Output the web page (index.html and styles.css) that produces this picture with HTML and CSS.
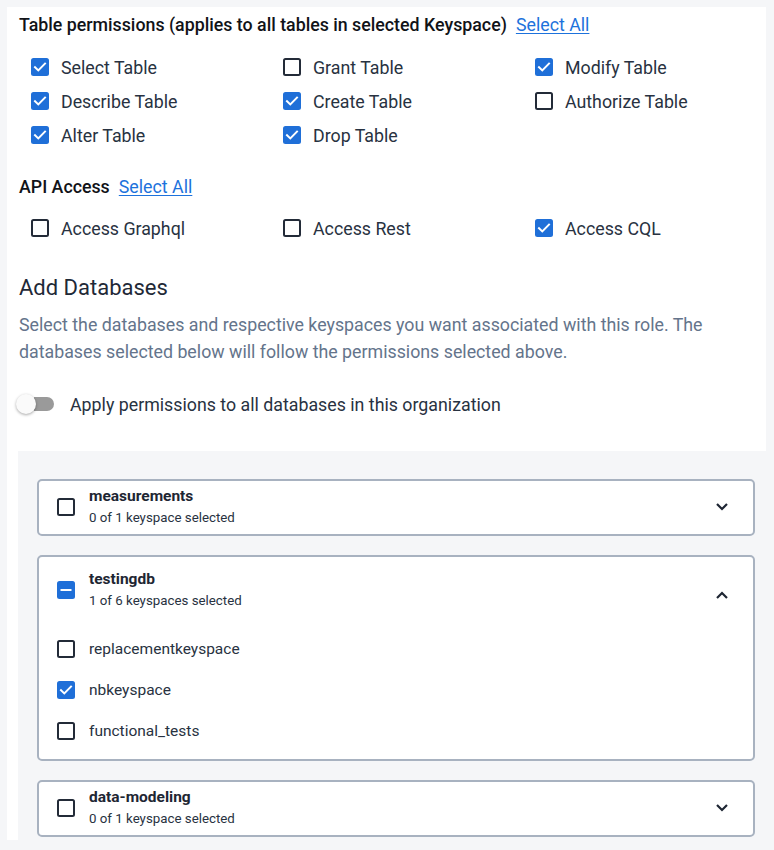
FILE: index.html
```html
<!DOCTYPE html>
<html>
<head>
<meta charset="utf-8">
<link rel="stylesheet" href="styles.css">
</head>
<body>
<div class="panel">
  <div class="sec-head first"><span class="sec-title">Table permissions (applies to all tables in selected Keyspace)</span><a class="link" href="#">Select All</a></div>
  <div class="perm-grid">
    <label class="opt"><span class="cb on"><svg viewBox="0 0 18 18"><path d="M4 9.2l3.3 3.2L14 5.6"/></svg></span>Select Table</label>
    <label class="opt"><span class="cb"></span>Grant Table</label>
    <label class="opt"><span class="cb on"><svg viewBox="0 0 18 18"><path d="M4 9.2l3.3 3.2L14 5.6"/></svg></span>Modify Table</label>
    <label class="opt"><span class="cb on"><svg viewBox="0 0 18 18"><path d="M4 9.2l3.3 3.2L14 5.6"/></svg></span>Describe Table</label>
    <label class="opt"><span class="cb on"><svg viewBox="0 0 18 18"><path d="M4 9.2l3.3 3.2L14 5.6"/></svg></span>Create Table</label>
    <label class="opt"><span class="cb"></span>Authorize Table</label>
    <label class="opt"><span class="cb on"><svg viewBox="0 0 18 18"><path d="M4 9.2l3.3 3.2L14 5.6"/></svg></span>Alter Table</label>
    <label class="opt"><span class="cb on"><svg viewBox="0 0 18 18"><path d="M4 9.2l3.3 3.2L14 5.6"/></svg></span>Drop Table</label>
  </div>
  <div class="sec-head api"><span class="sec-title">API Access</span><a class="link" href="#">Select All</a></div>
  <div class="perm-grid api-grid">
    <label class="opt"><span class="cb"></span>Access Graphql</label>
    <label class="opt"><span class="cb"></span>Access Rest</label>
    <label class="opt"><span class="cb on"><svg viewBox="0 0 18 18"><path d="M4 9.2l3.3 3.2L14 5.6"/></svg></span>Access CQL</label>
  </div>
  <h2 class="add-title">Add Databases</h2>
  <p class="desc">Select the databases and respective keyspaces you want associated with this role. The databases selected below will follow the permissions selected above.</p>
  <div class="toggle-row">
    <span class="switch"><span class="track"></span><span class="thumb"></span></span>
    <span class="toggle-label">Apply permissions to all databases in this organization</span>
  </div>
  <div class="db-area">
    <div class="card">
      <div class="card-head">
        <span class="cb"></span>
        <div class="card-text"><div class="card-title">measurements</div><div class="card-sub">0 of 1 keyspace selected</div></div>
        <svg class="chev" viewBox="0 0 14 9"><path d="M2 2l5 5 5-5"/></svg>
      </div>
    </div>
    <div class="card open">
      <div class="card-head">
        <span class="cb on"><svg viewBox="0 0 18 18"><path class="dash" d="M4.5 9h9"/></svg></span>
        <div class="card-text"><div class="card-title">testingdb</div><div class="card-sub">1 of 6 keyspaces selected</div></div>
        <svg class="chev up" viewBox="0 0 14 9"><path d="M2 7l5-5 5 5"/></svg>
      </div>
      <div class="ks-list">
        <label class="ks"><span class="cb"></span>replacementkeyspace</label>
        <label class="ks"><span class="cb on"><svg viewBox="0 0 18 18"><path d="M4 9.2l3.3 3.2L14 5.6"/></svg></span>nbkeyspace</label>
        <label class="ks"><span class="cb"></span>functional_tests</label>
      </div>
    </div>
    <div class="card">
      <div class="card-head">
        <span class="cb"></span>
        <div class="card-text"><div class="card-title">data-modeling</div><div class="card-sub">0 of 1 keyspace selected</div></div>
        <svg class="chev" viewBox="0 0 14 9"><path d="M2 2l5 5 5-5"/></svg>
      </div>
    </div>
  </div>
</div>
</body>
</html>
```
FILE: styles.css
```css
* { box-sizing: border-box; }
html, body { margin: 0; padding: 0; }
body {
  background: #f5f6f8;
  font-family: Roboto, "Liberation Sans", Arial, sans-serif;
  color: #283241;
  overflow: hidden;
}
.panel {
  margin: 7px 8px 0 7px;
  background: #fff;
  padding: 5px 0 0 11px;
  height: 833px;
}
.sec-head {
  display: flex;
  align-items: center;
  gap: 9px;
  height: 24px;
  padding-left: 1px;
}
.sec-title {
  font-size: 17.8px;
  font-weight: 500;
  color: #111318;
}
.link {
  font-size: 17.8px;
  color: #1d72dc;
  text-decoration: underline;
  text-underline-offset: 2px;
}
.perm-grid {
  display: grid;
  grid-template-columns: 252px 252px 240px;
  grid-auto-rows: 34px;
  margin-top: 14px;
  padding-left: 13px;
}
.sec-head.api { margin-top: 22px; }
.perm-grid.api-grid { margin-top: 13px; }
.opt {
  display: flex;
  align-items: center;
  gap: 12px;
  font-size: 17.8px;
  color: #283241;
}
.cb {
  flex: none;
  width: 18px;
  height: 18px;
  border: 2px solid #232b38;
  border-radius: 2.5px;
  display: inline-flex;
  align-items: center;
  justify-content: center;
  background: #fff;
}
.cb.on {
  border: none;
  background: #1f6fd8;
}
.cb svg { width: 18px; height: 18px; }
.cb svg path {
  fill: none;
  stroke: #fff;
  stroke-width: 2;
  stroke-linecap: square;
}
.add-title {
  margin: 29px 0 0 1px;
  font-size: 22px;
  font-weight: 400;
  line-height: 28px;
  color: #1f2937;
}
.desc {
  margin: 9px 0 0 1px;
  font-size: 17.8px;
  line-height: 27px;
  color: #64748b;
  padding-right: 20px;
}
.toggle-row {
  display: flex;
  align-items: center;
  height: 24px;
  margin-top: 27px;
}
.switch {
  position: relative;
  width: 54px;
  height: 24px;
  margin-left: -2px;
}
.track {
  position: absolute;
  left: 18px;
  top: 5px;
  width: 20px;
  height: 14px;
  border-radius: 0 7px 7px 0;
  background: #9a9a9a;
}
.thumb {
  position: absolute;
  left: 0;
  top: 2px;
  width: 20px;
  height: 20px;
  border-radius: 50%;
  background: #fafafa;
  box-shadow: 0 1px 3px rgba(0,0,0,0.35);
}
.toggle-label {
  font-size: 17.8px;
  color: #283241;
}
.db-area {
  margin-top: 35px;
  margin-right: -8px;
  background: #f5f6f8;
  padding: 28px 19px 40px 19px;
  display: flex;
  flex-direction: column;
  gap: 19px;
}
.card {
  background: #fff;
  border: 2px solid #a8b2c0;
  border-radius: 5px;
}
.card-head {
  display: flex;
  align-items: center;
  padding: 5px 24px 7px 18px;
}
.card.open .card-head { padding-top: 12px; padding-bottom: 0; }
.card-text {
  flex: 1;
  margin-left: 14px;
}
.card-title {
  font-size: 15.5px;
  font-weight: 700;
  line-height: 20px;
  color: #1e2633;
}
.card-sub {
  font-size: 13.3px;
  line-height: 18px;
  margin-top: 3px;
  color: #283241;
}
.chev {
  width: 14px;
  height: 9px;
}
.chev.up { margin-top: 12px; }
.chev path {
  fill: none;
  stroke: #1e2633;
  stroke-width: 2.2;
}
.ks-list {
  padding: 18px 0 8px 18px;
}
.ks {
  display: flex;
  align-items: center;
  gap: 14px;
  height: 41px;
  font-size: 15.5px;
  color: #283241;
}
```
